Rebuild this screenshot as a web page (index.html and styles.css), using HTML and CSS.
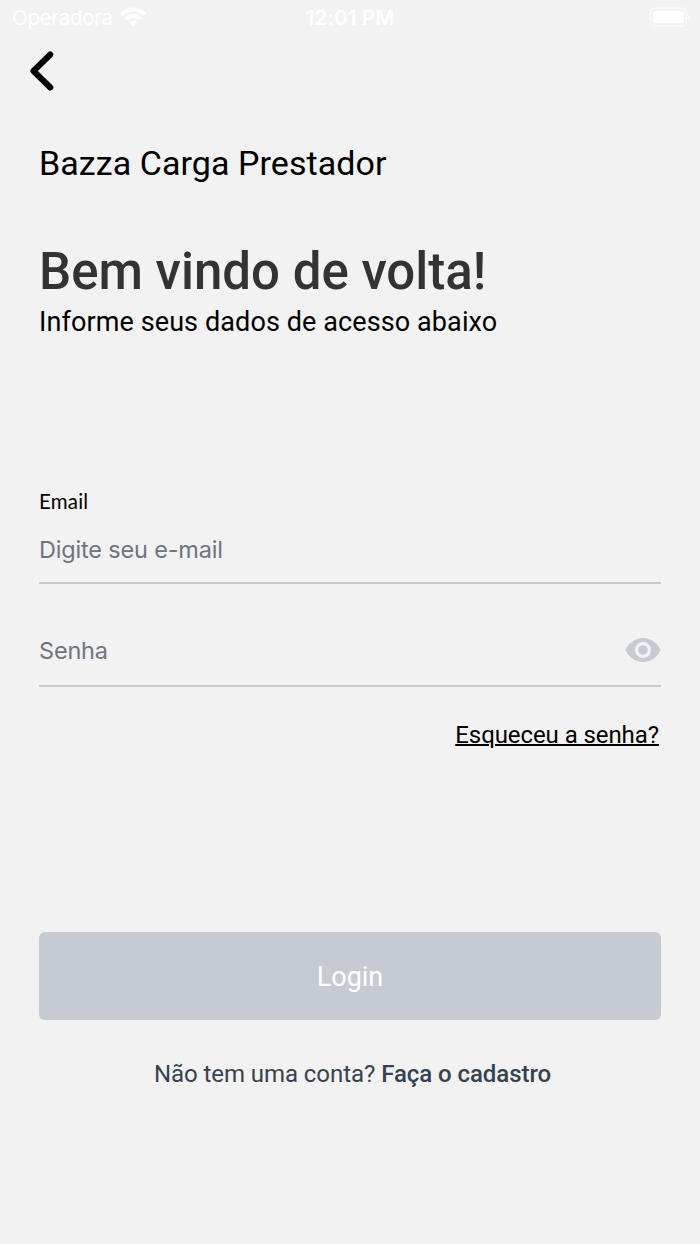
FILE: index.html
```html
<!DOCTYPE html>
<html lang="pt-BR">
<head>
<meta charset="utf-8">
<title>Bazza Carga Prestador</title>
<link rel="stylesheet" href="styles.css">
</head>
<body>
<div class="status">
  <div class="carrier"><span class="carrier-name">Operadora</span>
    <svg class="wifi" viewBox="0 0 26 19" width="26" height="19"><path d="M0 6 Q13 -5 26 6 L23.3 8.8 Q13 -.2 2.7 8.8Z M4.5 10.5 Q13 3 21.5 10.5 L18.7 13.3 Q13 8.5 7.3 13.3Z M9 15 Q13 11.7 17 15 L13 19Z"/></svg>
  </div>
  <span class="clock">12:01 PM</span>
  <svg class="battery" viewBox="0 0 42 20" width="42" height="20"><rect class="shell" x="1.500" y="1" width="36" height="18" rx="5"/><rect x="4" y="4" width="31" height="12" rx="2.500"/><path class="cap" d="M39.500 6.500q3 3.500 0 7z"/></svg>
</div>
<button class="back" aria-label="Voltar"><svg viewBox="0 0 24 40" width="24" height="40"><path d="M20.300 3.500L3.500 20L20.300 36.500"/></svg></button>
<main class="page">
  <div class="brand">Bazza Carga Prestador</div>
  <h1 class="title">Bem vindo de volta!</h1>
  <p class="subtitle">Informe seus dados de acesso abaixo</p>
  <form class="form">
    <label class="label"><span class="label-text">Email</span></label>
    <div class="field email"><span class="hint">Digite seu e-mail</span></div>
    <div class="field password"><span class="hint">Senha</span>
      <svg class="eye" viewBox="0 0 36 26" width="36" height="26"><path fill-rule="evenodd" d="M18 1C10 1 3.500 6 .5 13c3 7 9.500 12 17.500 12s14.500-5 17.500-12C32.500 6 26 1 18 1zm0 4a8 8 0 1 1 0 16a8 8 0 1 1 0-16zm0 3.200a4.800 4.800 0 1 0 0 9.600a4.800 4.800 0 1 0 0-9.600z"/></svg>
    </div>
    <a class="forgot">Esqueceu a senha?</a>
    <button class="login" type="button">Login</button>
  </form>
  <p class="signup">Não tem uma conta? <b>Faça o cadastro</b></p>
</main>
</body>
</html>
```
FILE: styles.css
```css
* { box-sizing: border-box; }
body { margin: 0; height: 1244px; background: #f2f2f2; color: #000; font-family: Roboto, sans-serif; }
button { border: 0; padding: 0; background: none; font: inherit; }
svg { display: block; flex: none; }
.status { height: 36px; display: grid; grid-template-columns: 1fr auto 1fr; align-items: center; padding: 0 9px 1px 12px; color: #fff; fill: #fff; font: 20.5px Inter, sans-serif; }
.carrier { display: flex; align-items: center; gap: 8px; letter-spacing: -.3px; }
.wifi { margin: -2px 0 0 -1px; }
.clock { font-weight: 600; letter-spacing: .15px; transform: translateX(-1.5px); }
.battery { justify-self: end; margin-top: -1px; }
.shell { fill: none; stroke: #f8f8f8; stroke-width: 2; }
.cap { fill: #fafafa; }
.back { display: block; margin: 15px 0 0 30px; height: 40px; }
.back path { fill: none; stroke: #000; stroke-width: 6; stroke-linecap: round; stroke-linejoin: round; }
.page { padding: 52px 39px 0; }
.brand { height: 40px; line-height: 40px; font-size: 34px; letter-spacing: .07px; white-space: nowrap; }
.title { margin: 59px 0 0; height: 60px; line-height: 60px; font-size: 51px; font-weight: 500; color: #333; white-space: nowrap; }
.subtitle { margin: 4px 0 0; height: 32px; line-height: 32px; font-size: 27px; letter-spacing: .1px; white-space: nowrap; }
.form { display: flex; flex-direction: column; padding-top: 150px; }
.label { height: 27px; line-height: 26px; font-family: Lato, sans-serif; font-size: 20.5px; letter-spacing: .2px; }
.field { display: flex; align-items: center; justify-content: space-between; border-bottom: 2px solid #c8cad3; }
.hint { color: #6f757e; font-family: Inter, sans-serif; font-size: 23.5px; letter-spacing: -.18px; }
.email { height: 69px; padding-top: 2px; border-bottom-color: #c8c9cc; }
.password { height: 103px; padding-top: 31px; }
.eye { fill: #c6cad3; }
.forgot { align-self: flex-end; margin: 32px 2px 0 0; height: 32px; line-height: 32px; font-size: 24px; letter-spacing: -.08px; text-decoration: underline; text-decoration-thickness: 1.5px; }
.login { height: 88px; margin-top: 181px; padding-top: 2px; border-radius: 6px; background: #c6cad3; color: #fff; font-size: 27px; letter-spacing: 0; }
.signup { margin: 38px 0 0 5px; height: 32px; line-height: 32px; text-align: center; font-size: 24px; color: #34434f; letter-spacing: -.06px; }
.signup b { font-weight: 500; }
```
